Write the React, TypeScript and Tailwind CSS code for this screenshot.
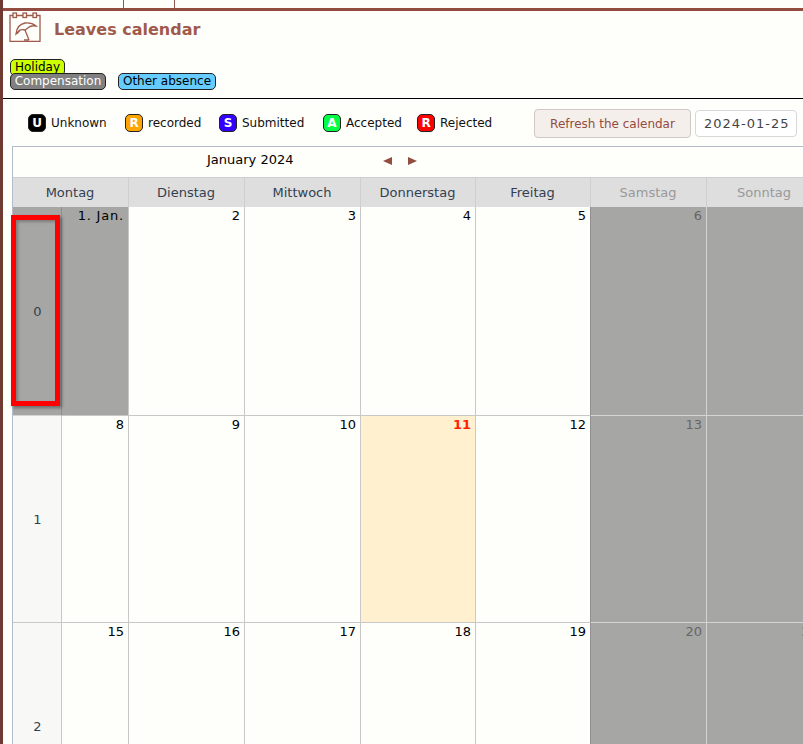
import type { ReactNode } from 'react'

const columns = 'grid grid-cols-[49px_67px_116px_116px_115px_115px_116px_116px]'

const types = [
  { letter: 'U', label: 'Unknown', color: 'bg-black', width: 'w-[97px]' },
  { letter: 'R', label: 'recorded', color: 'bg-[#ffa500]', width: 'w-[94px]' },
  { letter: 'S', label: 'Submitted', color: 'bg-[#3300ff]', width: 'w-[104px]' },
  { letter: 'A', label: 'Accepted', color: 'bg-[#00ff44]', width: 'w-[94px]' },
  { letter: 'R', label: 'Rejected', color: 'bg-[#ff0000]', width: 'w-[90px]' },
]

const dayNames = ['Montag', 'Dienstag', 'Mittwoch', 'Donnerstag', 'Freitag', 'Samstag', 'Sonntag']

const weeks = [
  { num: 0, days: ['1. Jan.', '2', '3', '4', '5', '6', '7'], height: 'h-[209px]' },
  { num: 1, days: ['8', '9', '10', '11', '12', '13', '14'], height: 'h-[207px]' },
  { num: 2, days: ['15', '16', '17', '18', '19', '20', '21'], height: 'h-[207px]' },
]

function CalendarIcon() {
  return (
    <svg width="32" height="30" viewBox="0 0 32 30" fill="none" stroke="#a05a4c" strokeWidth="1.3" className="shrink-0">
      <path d="M1 3.500h30v26H1z" />
      <rect x="4" y="1" width="3.500" height="4.500" fill="#fefefa" />
      <rect x="14" y="1" width="3.500" height="4.500" fill="#fefefa" />
      <rect x="24" y="1" width="3.500" height="4.500" fill="#fefefa" />
      <path d="M7 22c.5-6 4-10 9-11 4-.5 8 .5 11 3-3-.5-6 0-7.500 1.500l-3.500 2.500c-2-.5-3.500-.5-5 0z" />
      <path d="M16 18l4 10M15 28h5M11 18l-3 3.500" />
    </svg>
  )
}

function Tag({ color, children }: { color: string; children: ReactNode }) {
  return (
    <span className={`inline-block h-[17px] whitespace-nowrap rounded-[5px] border border-[#222] text-center text-[12px] leading-[15px] ${color}`}>
      {children}
    </span>
  )
}

function DayCell({ label, index, today }: { label: string; index: number; today: boolean }) {
  const weekend = index >= 5
  let bg = 'bg-[#fefefa] border-[#c8c8c8] text-black'
  if (weekend) bg = 'bg-[#a6a6a4] border-[#d4d4d4] text-[#666]'
  if (label === '1. Jan.') bg = 'bg-[#a6a6a4] border-[#c8c8c8] text-black tracking-[0.8px]'
  if (today) bg = 'bg-[#fff0cf] border-[#c8c8c8] text-[#ff2200] font-bold'

  return (
    <div className={`border-r border-b pl-[3px] pr-[4px] pt-[1px] text-right text-[13px] leading-[16px] ${bg} ${index === 4 ? 'border-r-[#8f8f8f]' : ''}`}>
      {label}
    </div>
  )
}

export default function App() {
  return (
    <div className="relative h-[744px] w-[803px] overflow-hidden bg-[#fefefa] font-['DejaVu_Sans',sans-serif] text-black">
      <div className="flex h-full">
        <div className="w-[3px] shrink-0 bg-[#6e3a32]" />

        <div className="min-w-0 flex-1">
          {/* strip of the page above */}
          <div className="flex h-[8px]">
            <div className="w-[121px] border-r border-[#8a5a50]" />
            <div className="w-[51px] border-r border-[#8a5a50]" />
          </div>
          <div className="h-[3px] bg-[#934c40]" />

          <div className="flex h-[38px] items-start pl-[6px] pt-[1px]">
            <CalendarIcon />
            <h1 className="ml-[13px] mt-[6px] text-[16px] font-bold leading-[24px] text-[#a05a4c]">Leaves calendar</h1>
          </div>

          <div className="pl-[7px] pt-[9px] leading-none">
            <div className="h-[15px]">
              <Tag color="w-[55px] bg-[#ccff00]">Holiday</Tag>
            </div>
            <div className="flex h-[17px] gap-[12px]">
              <Tag color="w-[96px] bg-[#808080] text-white">Compensation</Tag>
              <Tag color="w-[98px] bg-[#66ccff]">Other absence</Tag>
            </div>
          </div>

          <div className="mt-[8px] h-px bg-black" />

          <div className="flex h-[47px] items-center pl-[25px]">
            {types.map((t) => (
              <div key={t.label} className={`flex items-center gap-[5px] text-[12px] text-[#111] ${t.width}`}>
                <span className={`flex h-[18px] w-[18px] items-center justify-center rounded-[5px] border border-[#222] text-[12px] font-bold text-white ${t.color}`}>
                  {t.letter}
                </span>
                {t.label}
              </div>
            ))}
            <button className="ml-[27px] mt-[2px] h-[29px] w-[157px] rounded-[4px] border border-[#cfc8c4] bg-[#f5efec] text-[12px] text-[#934c40]">
              Refresh the calendar
            </button>
            <div className="ml-[4px] mt-[2px] flex h-[27px] w-[102px] items-center rounded-[4px] border border-[#d8d8d8] bg-white pl-[8px] text-[13px] tracking-[1px] text-[#444]">
              2024-01-25
            </div>
          </div>

          {/* calendar */}
          <div className="ml-[9px] w-[820px] border-t border-l border-[#b4bccb]">
            <div className="relative h-[30px]">
              <span className="absolute left-[194px] top-[5px] text-[13px] leading-[16px]">January 2024</span>
              <span className="absolute left-[370px] top-[10px] h-0 w-0 border-y-[4px] border-r-[9px] border-y-transparent border-r-[#934c40]" />
              <span className="absolute left-[395px] top-[10px] h-0 w-0 border-y-[4px] border-l-[9px] border-y-transparent border-l-[#934c40]" />
            </div>

            <div className={`${columns} h-[30px] border-t border-[#cfcfcf] bg-[#dedede]`}>
              <div className="col-span-2 flex items-center justify-center border-r border-[#cfcfcf] pr-[1px] text-[13px] text-[#333f50]">
                {dayNames[0]}
              </div>
              {dayNames.slice(1).map((name, i) => (
                <div
                  key={name}
                  className={`flex items-center justify-center border-r border-[#cfcfcf] pr-[1px] text-[13px] ${i >= 4 ? 'text-[#999]' : 'text-[#333f50]'}`}
                >
                  {name}
                </div>
              ))}
            </div>

            {weeks.map((week) => (
              <div key={week.num} className={`${columns} ${week.height}`}>
                <div
                  className={`flex items-center justify-center border-r border-b pl-[1px] pt-[2px] text-[13px] text-[#333f50] ${
                    week.num === 0 ? 'border-r-[#8f8f8f] border-b-[#d4d4d4] bg-[#a6a6a4]' : 'border-[#c8c8c8] bg-[#f8f8f6]'
                  }`}
                >
                  {week.num}
                </div>
                {week.days.map((d, i) => (
                  <DayCell key={d} label={d} index={i} today={d === '11'} />
                ))}
              </div>
            ))}
          </div>
        </div>
      </div>

      {/* red annotation */}
      <div className="absolute left-[11px] top-[215px] h-[191px] w-[49px] border-[5px] border-[#ff0000] shadow-[inset_2px_2px_3px_rgba(0,0,0,0.25),2px_2px_3px_rgba(0,0,0,0.35)]" />
    </div>
  )
}
